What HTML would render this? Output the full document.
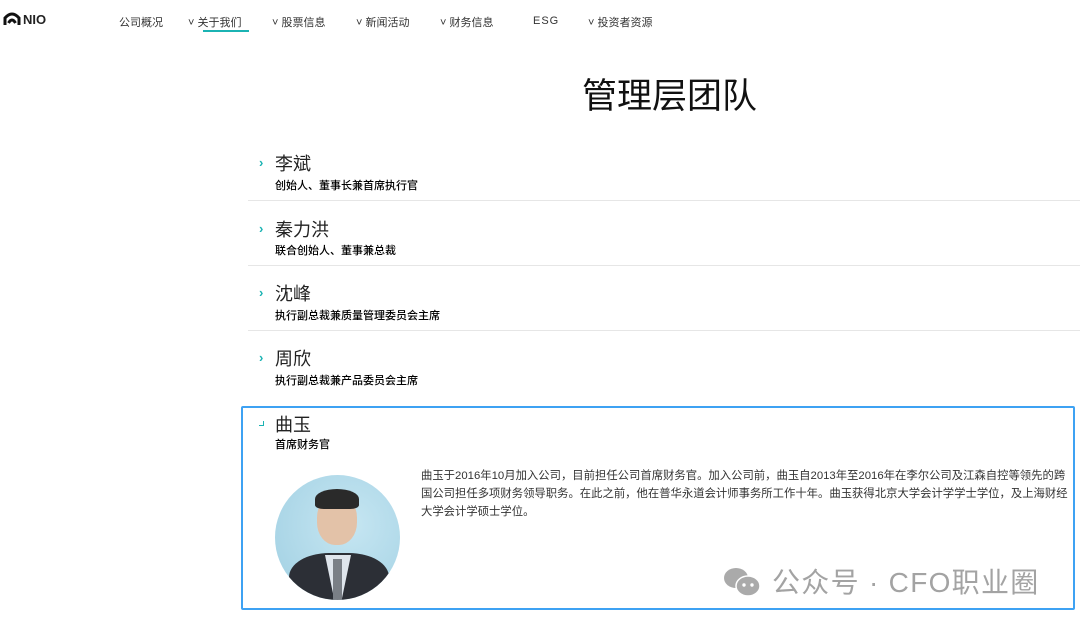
<!DOCTYPE html><html><head><meta charset="utf-8"><style>
body{margin:0;width:1080px;height:625px;background:#fff;font-family:"Liberation Sans","Noto Sans CJK SC",sans-serif;color:#222;position:relative;overflow:hidden}
.a{position:absolute;white-space:nowrap}
.nav{font-size:11px;top:14px;color:#333}
.nm{font-size:18px;color:#222}
.tt{font-size:11px;color:#000;font-weight:500}
.ch{color:#1bb3b3;font-size:13px;font-weight:bold}
.ln{position:absolute;left:248px;width:832px;height:1px;background:#e6e6e6}
</style></head><body>
<svg class="a" style="left:3px;top:11px" width="18" height="16" viewBox="0 0 18 16"><path d="M2 14 L2 7 Q9 -1 16 7 L16 14 M5.5 12 Q9 6 12.5 12" fill="none" stroke="#111" stroke-width="3"/></svg>
<div class="a" style="left:23px;top:12px;font-size:13px;font-weight:bold">NIO</div>
<div class="a nav" style="left:119px">公司概况</div>
<div class="a nav" style="left:188px">˅ 关于我们</div>
<div class="a" style="left:203px;top:30px;width:46px;height:2px;background:#1bb3b3"></div>
<div class="a nav" style="left:272px">˅ 股票信息</div>
<div class="a nav" style="left:356px">˅ 新闻活动</div>
<div class="a nav" style="left:440px">˅ 财务信息</div>
<div class="a nav" style="left:533px;top:15px;letter-spacing:1px">ESG</div>
<div class="a nav" style="left:588px">˅ 投资者资源</div>
<div class="a" style="left:582px;top:68px;font-size:35px;color:#111">管理层团队</div>

<div class="a ch" style="left:259px;top:155px">›</div><div class="a nm" style="left:275px;top:150px">李斌</div><div class="a tt" style="left:275px;top:177px">创始人、董事长兼首席执行官</div>
<div class="ln" style="top:200px"></div>
<div class="a ch" style="left:259px;top:221px">›</div><div class="a nm" style="left:275px;top:216px">秦力洪</div><div class="a tt" style="left:275px;top:242px">联合创始人、董事兼总裁</div>
<div class="ln" style="top:265px"></div>
<div class="a ch" style="left:259px;top:285px">›</div><div class="a nm" style="left:275px;top:280px">沈峰</div><div class="a tt" style="left:275px;top:307px">执行副总裁兼质量管理委员会主席</div>
<div class="ln" style="top:330px"></div>
<div class="a ch" style="left:259px;top:350px">›</div><div class="a nm" style="left:275px;top:345px">周欣</div><div class="a tt" style="left:275px;top:372px">执行副总裁兼产品委员会主席</div>

<div class="a" style="left:241px;top:406px;width:830px;height:200px;border:2px solid #3ea2f3;border-radius:2px"></div>
<div class="a" style="left:259px;top:421px;width:4px;height:4px;border-right:1.5px solid #1bb3b3;border-bottom:1.5px solid #1bb3b3"></div>
<div class="a nm" style="left:275px;top:411px">曲玉</div><div class="a tt" style="left:275px;top:436px">首席财务官</div>
<div class="a" style="left:421px;top:467px;width:649px;font-size:11.35px;line-height:18px;color:#333;white-space:normal">曲玉于2016年10月加入公司，目前担任公司首席财务官。加入公司前，曲玉自2013年至2016年在李尔公司及江森自控等领先的跨国公司担任多项财务领导职务。在此之前，他在普华永道会计师事务所工作十年。曲玉获得北京大学会计学学士学位，及上海财经大学会计学硕士学位。</div>
<div class="a" style="left:275px;top:475px;width:125px;height:125px;border-radius:50%;background:radial-gradient(circle at 60% 40%,#c6e6f2,#9fcfe2);overflow:hidden">
<div class="a" style="left:42px;top:20px;width:40px;height:50px;border-radius:45%;background:#e3c2a8"></div>
<div class="a" style="left:40px;top:14px;width:44px;height:20px;border-radius:50% 50% 20% 20%;background:#2a2a2a"></div>
<div class="a" style="left:14px;top:78px;width:100px;height:60px;border-radius:40% 40% 0 0;background:#2c2f36"></div>
<div class="a" style="left:50px;top:80px;width:26px;height:50px;background:#dfe5ec;clip-path:polygon(0 0,100% 0,60% 100%,40% 100%)"></div>
<div class="a" style="left:58px;top:84px;width:9px;height:45px;background:#7a7f86"></div>
</div>
<svg class="a" style="left:722px;top:566px" width="42" height="32" viewBox="0 0 42 32"><ellipse cx="14" cy="12" rx="12" ry="10" fill="#aaa"/><ellipse cx="26" cy="20" rx="12" ry="10" fill="#aaa" stroke="#fff" stroke-width="1.5"/><circle cx="22" cy="19" r="1.7" fill="#fff"/><circle cx="30" cy="19" r="1.7" fill="#fff"/></svg>
<div class="a" style="left:772px;top:561px;font-size:28px;letter-spacing:1.3px;color:#a3a3a3">公众号 · CFO职业圈</div>
</body></html>
